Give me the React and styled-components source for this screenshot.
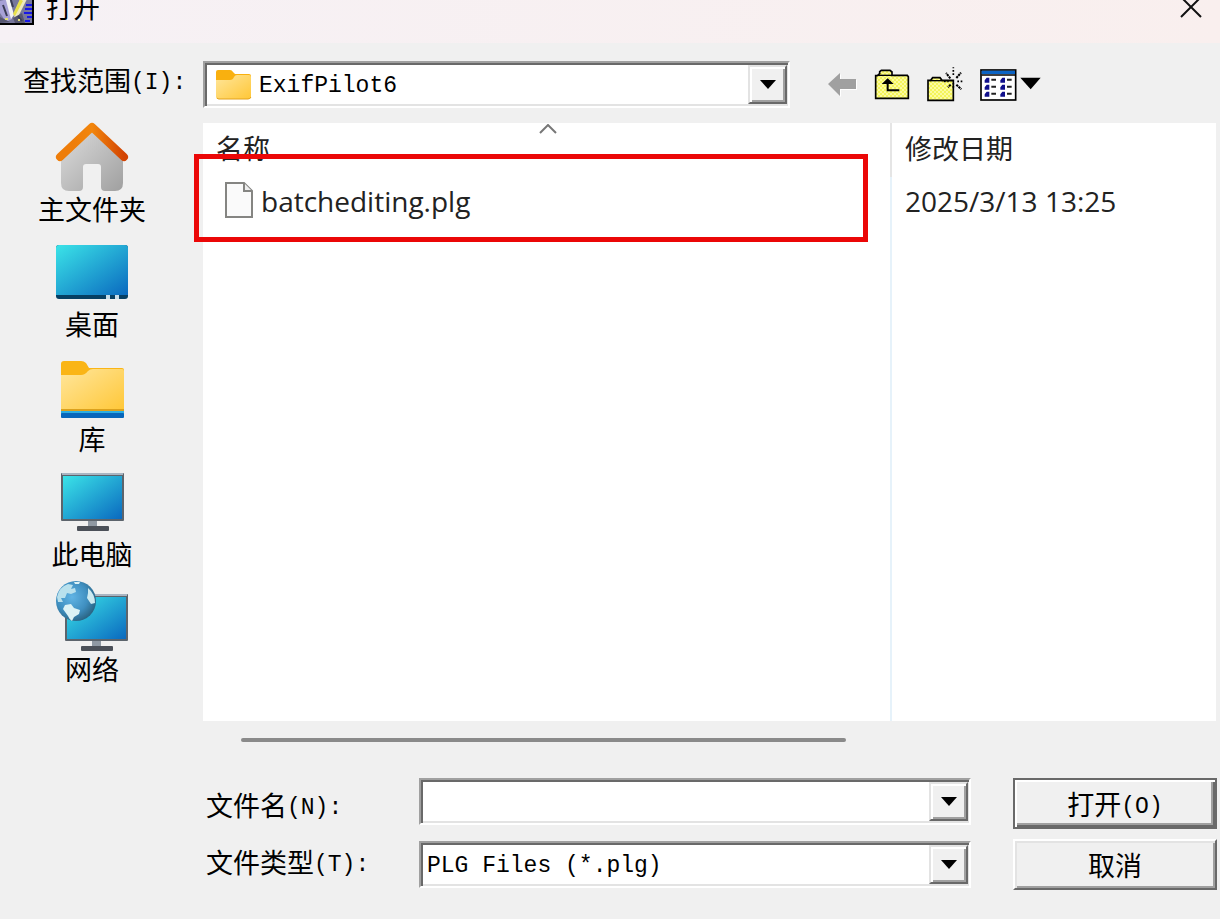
import React, { useState } from 'react'
import styled, { createGlobalStyle } from 'styled-components'

const places = [
    { name: '主文件夹', Icon: HomeIcon },
    { name: '桌面', Icon: DesktopIcon },
    { name: '库', Icon: LibraryIcon },
    { name: '此电脑', Icon: ComputerIcon },
    { name: '网络', Icon: NetworkIcon },
]

const files = [{ name: 'batchediting.plg', date: '2025/3/13 13:25' }]

function App() {

    const [fileName, setFileName] = useState('')

    return (
        <Dialog>
            <GlobalStyle />
            <TitleBar>
                <AppIcon />
                <Title>打开</Title>
                <CloseButton type="button" aria-label="关闭">
                    <svg width="22" height="22" viewBox="0 0 22 22" fill="none" stroke="#111" strokeWidth="2">
                        <path d="M1 1 L21 21 M21 1 L1 21" />
                    </svg>
                </CloseButton>
            </TitleBar>

            <LookInRow>
                <LookInLabel htmlFor="lookin">查找范围<Latin>(I):</Latin></LookInLabel>
                <Field>
                    <FolderIcon />
                    <Select id="lookin">
                        <option>ExifPilot6</option>
                    </Select>
                    <DropButton as="span"><DropArrow /></DropButton>
                </Field>
                <Toolbar>
                    <ToolButton type="button" aria-label="后退" disabled><BackIcon /></ToolButton>
                    <ToolButton type="button" aria-label="向上一级"><UpIcon /></ToolButton>
                    <ToolButton type="button" aria-label="新建文件夹"><NewFolderIcon /></ToolButton>
                    <ToolButton type="button" aria-label="查看菜单"><ViewIcon /></ToolButton>
                </Toolbar>
            </LookInRow>

            <Main>
                <Places>
                    {places.map(({ name, Icon }) => (
                        <Place type="button" key={name}>
                            <PlaceIcon><Icon /></PlaceIcon>
                            {name}
                        </Place>
                    ))}
                </Places>
                <Content>
                    <ListPanel>
                        <FileTable>
                            <thead>
                                <tr>
                                    <HeadCell>
                                        <SortMark width="18" height="10" viewBox="0 0 18 10" fill="none" stroke="#777" strokeWidth="2">
                                            <path d="M1 9 L9 1 L17 9" />
                                        </SortMark>
                                        名称
                                    </HeadCell>
                                    <HeadCell $date>修改日期</HeadCell>
                                </tr>
                            </thead>
                            <tbody>
                                {files.map(file => (
                                    <tr key={file.name}>
                                        <Cell>
                                            <FileLabel><FileIcon />{file.name}</FileLabel>
                                            <Highlight />
                                        </Cell>
                                        <Cell $date>{file.date}</Cell>
                                    </tr>
                                ))}
                                <tr aria-hidden="true">
                                    <FillCell />
                                    <FillCell $date />
                                </tr>
                            </tbody>
                        </FileTable>
                    </ListPanel>
                    <ScrollTrack><ScrollThumb /></ScrollTrack>
                </Content>
            </Main>

            <Footer>
                <Labels>
                    <FooterLabel htmlFor="filename">文件名<Latin>(N):</Latin></FooterLabel>
                    <FooterLabel htmlFor="filetype">文件类型<Latin>(T):</Latin></FooterLabel>
                </Labels>
                <Fields>
                    <Field>
                        <Input id="filename" type="text" value={fileName} onChange={e => setFileName(e.target.value)} />
                        <DropButton type="button" aria-label="文件名列表"><DropArrow /></DropButton>
                    </Field>
                    <Field>
                        <Select id="filetype">
                            <option>PLG Files (*.plg)</option>
                        </Select>
                        <DropButton as="span"><DropArrow /></DropButton>
                    </Field>
                </Fields>
                <Actions>
                    <Button type="button" $primary>打开<Latin>(O)</Latin></Button>
                    <Button type="button">取消</Button>
                </Actions>
            </Footer>
        </Dialog>
    )
}

export default App

function AppIcon() {
    return (
        <svg width="34" height="36" viewBox="0 0 34 36">
            <rect width="34" height="36" fill="#000" />
            <rect width="32" height="34" fill="#77779c" />
            <path d="M0 12 L8 10 L12 30 L6 33 L0 24 Z" fill="#a7a2d6" />
            <path d="M4 4 L8 4 L14 26 L11 30 Z" fill="#f2f2f4" />
            <path d="M24 2 L27 10 L19 26 L14 30 L15 22 Z" fill="#eeeac0" />
            <path d="M20 10 L23 12 L15 27 L13 25 Z" fill="#e8e04a" />
            <path d="M0 28 L10 33 L0 34 Z M13 29 L22 24 L25 34 H15 Z" fill="#565670" />
            <path d="M10 8 L13 18 M3 16 L7 27 M18 27 L22 32" stroke="#3b3d55" strokeWidth="2" />
            <path d="M5 30 H8 M18 31 H20" stroke="#e2e070" strokeWidth="2" />
            <path d="M26 16 H32 M25 20 H32 M24 24 H32 M27 28 H32 M25 32 H30" stroke="#1717e6" strokeWidth="2" />
        </svg>
    )
}

function FolderIcon() {
    return (
        <svg width="38" height="32" viewBox="0 0 38 32">
            <defs>
                <linearGradient id="folder" x1="0" y1="0" x2="1" y2="1">
                    <stop offset="0" stopColor="#ffe69c" />
                    <stop offset="1" stopColor="#ffc737" />
                </linearGradient>
            </defs>
            <path d="M1 3 Q1 1 3 1 H15 Q17 1 18 3 L20 5 H34 Q36 5 36 7 V14 H1 Z" fill="#f9b00f" />
            <path d="M1 11 H15 Q18 11 19 8 Q20 6 22 6 H34 Q36 6 36 8 V28 Q36 30 34 30 H3 Q1 30 1 28 Z" fill="url(#folder)" />
            <path d="M2 29 Q3 30 4 30 H33 Q35 30 36 28" fill="none" stroke="#e3a21c" strokeWidth="1" />
        </svg>
    )
}

function FileIcon() {
    return (
        <svg width="28" height="38" viewBox="0 0 28 38">
            <path d="M1 1 H19 L27 9 V35 H1 Z" fill="#fafafa" stroke="#858582" strokeWidth="2" />
            <path d="M19 1 V9 H27" fill="#eee" stroke="#858582" strokeWidth="2" />
        </svg>
    )
}

function BackIcon() {
    return (
        <svg width="30" height="26" viewBox="0 0 30 26">
            <path d="M1 13 L13 2 V8 H29 V18 H13 V25 Z" fill="#fff" />
            <path d="M0 12 L12 1 V7 H28 V17 H12 V24 Z" fill="#a0a0a0" />
        </svg>
    )
}

function Dither() {
    return (
        <defs>
            <pattern id="dither" width="12" height="12" patternUnits="userSpaceOnUse">
                <rect width="12" height="12" fill="#f4f45a" />
                <path d="M0 0 H6 V6 H0 Z M6 6 H12 V12 H6 Z" fill="#fbfba0" />
            </pattern>
        </defs>
    )
}

function UpIcon() {
    return (
        <svg width="36" height="32" viewBox="0 0 108 96">
            <Dither />
            <path d="M5 88 V20 H10 L17 14 V8 L22 4 H48 L54 9 V19 H100 L103 23 V88 Z" fill="url(#dither)" stroke="#000" strokeWidth="5" />
            <path d="M12 19 H54" stroke="#000" strokeWidth="4" />
            <path d="M41 28 L59 45 H23 Z" fill="#000" />
            <path d="M41 40 V64 H76" fill="none" stroke="#000" strokeWidth="6" />
        </svg>
    )
}

function NewFolderIcon() {
    return (
        <svg width="38" height="36" viewBox="0 0 114 108">
            <path d="M6 100 V40 H14 L20 32 H42 L48 40 H82 V100 Z" fill="url(#dither)" stroke="#000" strokeWidth="5" />
            <path d="M10 41 H82" stroke="#000" strokeWidth="4" />
            <path d="M82 24 V1 M82 62 V49 M94 43 H113 M54 43 H68" stroke="#000" strokeWidth="5" strokeDasharray="5 5" />
            <path d="M91 33 L105 17 M73 34 L60 18 M91 53 L106 67 M74 53 L66 61" stroke="#000" strokeWidth="6" strokeDasharray="7 2" />
        </svg>
    )
}

function ViewIcon() {
    return (
        <svg width="64" height="32" viewBox="0 0 192 96">
            <rect x="3" y="3" width="104" height="90" fill="#fff" stroke="#000" strokeWidth="5" />
            <path d="M5 10 H105" stroke="#0b63c4" strokeWidth="10" />
            <path d="M5 18 H105" stroke="#000" strokeWidth="5" />
            {[32, 53, 74].map(y => (
                <g key={y}>
                    <path d={`M28 ${y - 6} V${y + 9} H14 V${y + 2} L20 ${y - 6} Z M75 ${y - 6} V${y + 9} H61 V${y + 2} L67 ${y - 6} Z`} fill="#10108c" />
                    <path d={`M34 ${y} H48 M81 ${y} H95`} stroke="#222" strokeWidth="6" />
                </g>
            ))}
            <path d="M121 26 H182 L152 61 Z" fill="#000" />
        </svg>
    )
}

function DropArrow() {
    return (
        <svg width="16" height="10" viewBox="0 0 16 10">
            <path d="M0 0 H16 L8 9 Z" fill="#000" />
        </svg>
    )
}

function HomeIcon() {
    return (
        <svg width="74" height="72" viewBox="0 0 74 72">
            <defs>
                <linearGradient id="wall" x1="0" y1="0" x2="1" y2="1">
                    <stop offset="0" stopColor="#dedede" />
                    <stop offset="1" stopColor="#a0a0a0" />
                </linearGradient>
                <linearGradient id="roof" x1="0" y1="0" x2="1" y2="0">
                    <stop offset="0.2" stopColor="#ee7d0a" />
                    <stop offset="0.5" stopColor="#f2860c" />
                    <stop offset="1" stopColor="#d24302" />
                </linearGradient>
            </defs>
            <path d="M6 33 L37 6 L68 33 V62 Q68 70 60 70 H50 Q46 70 46 66 V46 Q46 43 43 43 H31 Q28 43 28 46 V66 Q28 70 24 70 H14 Q6 70 6 62 Z" fill="url(#wall)" />
            <path d="M5 36 L37 6 L69 36" fill="none" stroke="url(#roof)" strokeWidth="8" strokeLinecap="round" strokeLinejoin="round" />
        </svg>
    )
}

function ScreenGradient({ id }) {
    return (
        <defs>
            <linearGradient id={id} x1="0" y1="0" x2="1" y2="1">
                <stop offset="0" stopColor="#3be4e8" />
                <stop offset="1" stopColor="#0a69bf" />
            </linearGradient>
        </defs>
    )
}

function DesktopIcon() {
    return (
        <svg width="74" height="72" viewBox="0 0 74 72">
            <ScreenGradient id="desk" />
            <rect x="1" y="9" width="72" height="54" rx="3" fill="#063f63" />
            <path d="M1 12 Q1 9 4 9 H70 Q73 9 73 12 V59 H1 Z" fill="url(#desk)" />
            <path d="M51 59 H55 V63 H51 Z M60 59 H64 V63 H60 Z" fill="#c8dce8" />
        </svg>
    )
}

function LibraryIcon() {
    return (
        <svg width="74" height="72" viewBox="0 0 74 72">
            <path d="M6 13 Q6 10 9 10 H26 Q29 10 31 12 L34 17 H67 Q69 17 69 19 V30 H6 Z" fill="#fab516" />
            <path d="M6 24 H26 Q30 24 33 20 Q35 18 38 18 H67 Q69 18 69 20 V60 H6 Z" fill="url(#folder)" />
            <path d="M6 59 H69" stroke="#dba11d" strokeWidth="2" />
            <rect x="6" y="60" width="63" height="3" fill="#2cafe2" />
            <rect x="6" y="62" width="63" height="5" rx="1" fill="#0766bb" />
        </svg>
    )
}

function ComputerIcon() {
    return (
        <svg width="74" height="72" viewBox="0 0 74 72">
            <ScreenGradient id="pc" />
            <path d="M33 54 H42 V61 H33 Z" fill="#9099a3" />
            <rect x="22" y="60" width="32" height="5" rx="1" fill="#4b5058" />
            <rect x="6" y="7" width="63" height="48" rx="1" fill="#5c646c" />
            <path d="M7 8 H68" stroke="#a9b5c2" strokeWidth="2" />
            <rect x="8" y="10" width="59" height="43" fill="url(#pc)" />
        </svg>
    )
}

function NetworkIcon() {
    return (
        <svg width="74" height="72" viewBox="0 0 74 72">
            <ScreenGradient id="net" />
            <defs>
                <radialGradient id="globe" cx="0.4" cy="0.4" r="0.65">
                    <stop offset="0" stopColor="#61b4e4" />
                    <stop offset="0.6" stopColor="#3f8fc0" />
                    <stop offset="1" stopColor="#29617f" />
                </radialGradient>
            </defs>
            <path d="M37 59 H46 V66 H37 Z" fill="#9099a3" />
            <rect x="26" y="65" width="32" height="5" rx="1" fill="#4b5058" />
            <rect x="10" y="13" width="63" height="47" rx="1" fill="#5c646c" />
            <path d="M11 14 H72" stroke="#a9b5c2" strokeWidth="2" />
            <rect x="12" y="16" width="59" height="42" fill="url(#net)" />
            <circle cx="21" cy="20" r="20" fill="url(#globe)" />
            <path d="M8 28 L10 24 L16 23 L19 27 L25 29 L24 33 L19 36 L17 40 Q14 38 13 35 Z" fill="#dcf2f5" />
            <path d="M2 16 Q4 6 13 3 L18 4 L16 8 L20 7 L21 11 L16 13 L12 12 L10 17 L6 17 L8 21 L3 21 Z" fill="#b9e1ed" />
            <path d="M33 7 Q40 13 40 22 L36 23 L32 17 L33 12 Z" fill="#cdeaf0" />
            <path d="M19 1 L25 1 L24 3 L20 3 Z" fill="#dcf2f5" />
        </svg>
    )
}

const GlobalStyle = createGlobalStyle`
    body {
        margin: 0;
        background: #f0f0f0;
    }

    *, *::before, *::after {
        box-sizing: border-box;
    }

    svg {
        display: block;
        flex: none;
    }
`

const Dialog = styled.div`
    min-height: 100vh;
    overflow: hidden;
    background: #f0f0f0;
    color: #000;
    font-family: 'Noto Sans CJK SC', sans-serif;
    font-size: 27px;
    line-height: 32px;
`

/* the top of the title bar runs off the window */
const TitleBar = styled.header`
    display: flex;
    align-items: center;
    height: 72px;
    margin-top: -29px;
    padding-right: 18px;
    background: linear-gradient(to right, #f6f1f5, #f9efee);
`

const Title = styled.h1`
    flex: 1;
    margin: 0 0 0 12px;
    font-size: 27px;
    font-weight: 400;
    line-height: 30px;
`

const CloseButton = styled.button`
    padding: 0;
    border: none;
    background: none;
`

const Latin = styled.span`
    font-family: 'Liberation Mono', monospace;
    font-size: 23px;
    line-height: 1;
    vertical-align: 2px;
`

const LookInRow = styled.div`
    display: flex;
    align-items: flex-start;
    padding-top: 18px;
`

const LookInLabel = styled.label`
    flex: 0 0 203px;
    padding: 3px 0 0 23px;
    white-space: nowrap;
`

const Field = styled.div`
    display: flex;
    flex: 1;
    align-items: center;
    min-width: 0;
    height: 47px;
    padding: 2px 1px 2px 10px;
    border: 2px solid;
    border-color: #a0a0a0 #fff #fff #a0a0a0;
    background: #fff;
    box-shadow: inset 2px 2px 0 #696969, inset -1px -2px 0 #e3e3e3;
`

const Select = styled.select`
    flex: 1;
    min-width: 0;
    height: 36px;
    padding: 2px 0 0 6px;
    border: none;
    outline: none;
    appearance: none;
    background: transparent;
    color: #000;
    font-family: 'Liberation Mono', monospace;
    font-size: 23px;
`

const Input = styled.input`
    flex: 1;
    min-width: 0;
    height: 36px;
    padding: 0 6px;
    border: none;
    outline: none;
    background: transparent;
    font-family: 'Liberation Mono', monospace;
    font-size: 23px;
`

const DropButton = styled.button`
    display: flex;
    flex: 0 0 39px;
    align-items: center;
    justify-content: center;
    align-self: stretch;
    padding: 0;
    border: 2px solid;
    border-color: #e3e3e3 #696969 #696969 #e3e3e3;
    background: #f0f0f0;
    box-shadow: inset 2px 2px 0 #fff, inset -2px -2px 0 #a0a0a0;
    pointer-events: none;
`

const Toolbar = styled.div`
    display: flex;
    flex: 0 0 430px;
    align-items: center;
    gap: 16px;
    height: 47px;
    padding-left: 38px;
`

const ToolButton = styled.button`
    padding: 0;
    border: none;
    background: none;
`

const Main = styled.main`
    display: grid;
    grid-template-columns: 203px 1fr;
    padding: 15px 4px 0 0;
`

const Places = styled.nav`
    display: flex;
    flex-direction: column;
    gap: 11px;
    margin-top: -2px;
    padding-right: 19px;
`

const Place = styled.button`
    display: flex;
    flex-direction: column;
    align-items: center;
    padding: 0;
    border: none;
    background: none;
    color: #000;
    font-family: inherit;
    font-size: 27px;
    line-height: 32px;
`

const PlaceIcon = styled.span`
    height: 72px;
`

const Content = styled.div`
    display: flex;
    flex-direction: column;
    min-width: 0;
`

const ListPanel = styled.div`
    display: flex;
    height: 598px;
    background: #fff;
`

const FileTable = styled.table`
    width: 100%;
    height: 100%;
    table-layout: fixed;
    border-collapse: separate;
    border-spacing: 0;
`

const HeadCell = styled.th`
    position: relative;
    width: ${props => props.$date ? '326px' : 'auto'};
    height: 54px;
    padding: 0 0 4px 13px;
    border-left: ${props => props.$date ? '2px solid #e5e5e5' : 'none'};
    color: #222;
    font-weight: 400;
    text-align: left;
`

const SortMark = styled.svg`
    position: absolute;
    top: 1px;
    left: 50%;
    margin-left: -8px;
`

const Cell = styled.td`
    position: relative;
    height: 48px;
    padding: 0 0 0 13px;
    border-left: ${props => props.$date ? '2px solid #e6f2fa' : 'none'};
    color: #222;
    font-family: 'Open Sans', 'Noto Sans CJK SC', sans-serif;
    font-size: 28px;
`

const FillCell = styled.td`
    padding: 0;
    border-left: ${props => props.$date ? '2px solid #e6f2fa' : 'none'};
`

const FileLabel = styled.span`
    display: flex;
    align-items: center;
    gap: 8px;
    padding-left: 9px;
`

const Highlight = styled.span`
    position: absolute;
    top: -23px;
    right: 22px;
    bottom: -17px;
    left: -9px;
    border: 5px solid #eb0707;
    pointer-events: none;
`

const ScrollTrack = styled.div`
    padding: 17px 0 36px 38px;
`

const ScrollThumb = styled.div`
    width: 62%;
    height: 4px;
    border-radius: 2px;
    background: #8a8a8a;
`

const Footer = styled.footer`
    display: grid;
    grid-template-columns: 213px 1fr 204px;
    padding: 0 3px 29px 206px;
`

const Labels = styled.div`
    display: flex;
    flex-direction: column;
`

const FooterLabel = styled.label`
    height: 57px;
    line-height: 54px;
    white-space: nowrap;
`

const Fields = styled.div`
    display: flex;
    flex-direction: column;
    gap: 16px;
    margin-right: 42px;

    ${Field} {
        flex: none;
        padding-left: 2px;
    }

    ${Select} {
        padding-left: 4px;
    }
`

const Actions = styled.div`
    display: flex;
    flex-direction: column;
    gap: 10px;
`

const Button = styled.button`
    height: 51px;
    padding: 0;
    border: 2px solid;
    border-color: ${props => props.$primary ? '#696969' : '#fff #696969 #696969 #fff'};
    background: #f0f0f0;
    box-shadow: ${props => props.$primary
        ? 'inset 2px 2px 0 #fff, inset -2px -2px 0 #696969, inset -4px -4px 0 #a0a0a0'
        : 'inset 2px 2px 0 #e3e3e3, inset -2px -2px 0 #a0a0a0'};
    color: #000;
    font-family: inherit;
    font-size: 27px;
    line-height: 32px;
`
